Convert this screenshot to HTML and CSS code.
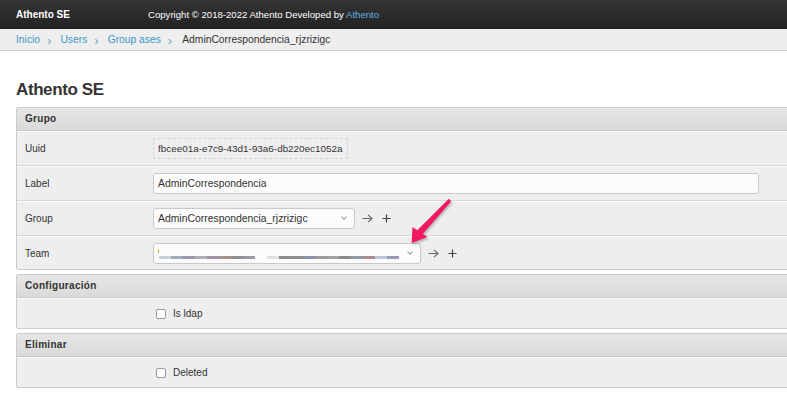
FILE: index.html
```html
<html>
<head>
	<meta charset="utf-8">
	<link rel="stylesheet" href="styles.css">
</head>
<body>
	<div class="topbar">
		<div class="brand">Athento SE</div>
		<div class="copy">Copyright &copy; 2018-2022 Athento Developed by <a href="#">Athento</a></div>
	</div>
	<div class="crumbs">
		<a href="#">Inicio</a><span class="sep">&rsaquo;</span>
		<a href="#">Users</a><span class="sep">&rsaquo;</span>
		<a href="#">Group ases</a><span class="sep">&rsaquo;</span>
		<span class="here">AdminCorrespondencia_rjzrizigc</span>
	</div>

	<div class="content">
		<h1>Athento SE</h1>

		<div class="module">
			<h2>Grupo</h2>
			<div class="row">
				<div class="lbl">Uuid</div>
				<div class="readonly">fbcee01a-e7c9-43d1-93a6-db220ec1052a</div>
			</div>
			<div class="row">
				<div class="lbl">Label</div>
				<div class="input wide">AdminCorrespondencia</div>
			</div>
			<div class="row">
				<div class="lbl">Group</div>
				<div class="input select group">AdminCorrespondencia_rjzrizigc<span class="caret"></span></div>
				<svg class="act" width="11" height="9" viewBox="0 0 11 9"><path d="M0.5 4.5 H10 M6 0.8 L10 4.5 L6 8.2" fill="none" stroke="#666" stroke-width="1.1"/></svg>
				<svg class="act plus" width="9" height="9" viewBox="0 0 9 9"><path d="M4.5 0.5 V8.5 M0.5 4.5 H8.5" fill="none" stroke="#444" stroke-width="1.2"/></svg>
			</div>
			<div class="row last">
				<div class="lbl">Team</div>
				<div class="input select team">
					<span class="mark"></span>
					<div class="blur">
						<i style="background:#c8d0da"></i><i style="background:#a0acbc"></i><i style="background:#9b98ae"></i><i style="background:#a8acbc"></i><i style="background:#9d92a2"></i><i style="background:#a89090"></i><i style="background:#8e8e8e"></i><i style="background:#9a98a6"></i>
						<i class="gap"></i>
						<i style="background:#e2e2e2"></i><i style="background:#8c8c8c"></i><i style="background:#8e8e8e"></i><i style="background:#8a90a8"></i><i style="background:#9a9a9a"></i><i style="background:#a8a0a8"></i><i style="background:#8a8a8a"></i><i style="background:#9098a8"></i><i style="background:#a88e8e"></i><i style="background:#b8c8d8"></i><i style="background:#9a9ab8"></i>
					</div>
					<span class="caret"></span>
				</div>
				<svg class="act" width="11" height="9" viewBox="0 0 11 9"><path d="M0.5 4.5 H10 M6 0.8 L10 4.5 L6 8.2" fill="none" stroke="#666" stroke-width="1.1"/></svg>
				<svg class="act plus" width="9" height="9" viewBox="0 0 9 9"><path d="M4.5 0.5 V8.5 M0.5 4.5 H8.5" fill="none" stroke="#444" stroke-width="1.2"/></svg>
			</div>
		</div>

		<div class="module">
			<h2>Configuración</h2>
			<div class="row check last">
				<span class="box"></span><span class="cl">Is ldap</span>
			</div>
		</div>

		<div class="module">
			<h2>Eliminar</h2>
			<div class="row check last">
				<span class="box"></span><span class="cl">Deleted</span>
			</div>
		</div>
	</div>

	<svg class="pointer" width="60" height="60" viewBox="0 0 60 60">
		<path d="M43.8 3.8 L46.2 6.2 L17.3 39.6 L12.3 35.2 Z" fill="#f0195f"/>
		<polygon points="6.7,48 7.5,32 22.5,42" fill="#f0195f"/>
	</svg>
</body>
</html>
```

FILE: styles.css
```css
html {
	overflow-x: hidden;
}

body {
	margin: 0;
	font-family: "Liberation Sans", Arial, sans-serif;
	color: #333;
	background: #fff;
	font-size: 11px;
}

.topbar {
	height: 29px;
	display: flex;
	align-items: center;
	padding-left: 16px;
	background: linear-gradient(#353535, #222);
	color: #fff;
	font-size: 9.6px;
}

.brand {
	font-weight: bold;
	width: 132px;
	font-size: 10px;
}

.copy a {
	color: #5db3e0;
	text-decoration: none;
}

.crumbs {
	height: 21px;
	display: flex;
	align-items: center;
	padding-left: 16px;
	background: #eee;
	border-bottom: 1px solid #ccc;
	font-size: 10.3px;
}

.crumbs a {
	color: #3c98c8;
	text-decoration: none;
}

.crumbs .sep {
	color: #6aa6c8;
	font-size: 13px;
	margin: 0 9px 0 7px;
	position: relative;
	top: 1px;
}

.crumbs .here {
	color: #333;
	margin-left: 1px;
}

.content {
	padding: 29px 0 0 16px;
}

h1 {
	margin: 0 0 7px 0;
	font-size: 17px;
	letter-spacing: -0.4px;
	line-height: 20px;
	font-weight: bold;
	color: #333;
}

.module {
	width: 790px;
	border: 1px solid #ccc;
	border-radius: 2px;
	background: #eee;
	margin-bottom: 4px;
}

.module h2 {
	margin: 0;
	height: 22px;
	line-height: 22px;
	padding-left: 8px;
	font-size: 10px;
	font-weight: bold;
	letter-spacing: 0.3px;
	color: #333;
	background: linear-gradient(#e6e6e6, #dadada);
	border-bottom: 1px solid #c8c8c8;
	box-shadow: 0 1px 0 #fafafa;
	margin-bottom: 1px;
}

.row {
	height: 33px;
	display: flex;
	align-items: center;
	padding-left: 8px;
	border-bottom: 1px solid #d6d6d6;
	box-shadow: 0 1px 0 #fafafa;
	margin-bottom: 1px;
}

.row.last {
	border-bottom: none;
	box-shadow: none;
	margin-bottom: 0;
	height: 32px;
}

.lbl {
	width: 128px;
	font-size: 10px;
	color: #333;
}

.readonly {
	height: 21px;
	line-height: 19px;
	padding: 0 4px;
	border: 1px dashed #d4d4d4;
	font-size: 9.9px;
	color: #333;
	box-sizing: border-box;
	white-space: nowrap;
}

.input {
	height: 21px;
	line-height: 19px;
	box-sizing: border-box;
	border: 1px solid #c8c8c8;
	border-radius: 3px;
	background: #fcfcfc;
	padding-left: 4px;
	font-size: 10.4px;
	color: #333;
	position: relative;
	white-space: nowrap;
}

.input.wide {
	width: 606px;
}

.input.group {
	width: 202px;
}

.input.team {
	width: 268px;
}

.caret {
	position: absolute;
	right: 8px;
	top: 6px;
	width: 3px;
	height: 3px;
	border-right: 1px solid #999;
	border-bottom: 1px solid #999;
	transform: rotate(45deg);
}

.act {
	margin-left: 7px;
}

.act.plus {
	margin-left: 9px;
}

.mark {
	position: absolute;
	left: 4px;
	top: 5px;
	width: 1px;
	height: 4px;
	background: #f0a040;
}

.blur {
	position: absolute;
	left: 5px;
	top: 12px;
	display: flex;
}

.blur i {
	display: block;
	width: 12px;
	height: 3px;
}

.blur i.gap {
	background: none;
}

.row.check.last {
	height: 29px;
	padding-left: 139px;
}

.box {
	width: 10px;
	height: 10px;
	box-sizing: border-box;
	border: 1px solid #9a9a9a;
	border-radius: 2px;
	background: #fff;
	margin-right: 7px;
}

.cl {
	font-size: 10px;
	color: #333;
}

.pointer {
	position: absolute;
	left: 405px;
	top: 195px;
	filter: drop-shadow(1px 2px 1px rgba(0,0,0,0.25));
}
```
